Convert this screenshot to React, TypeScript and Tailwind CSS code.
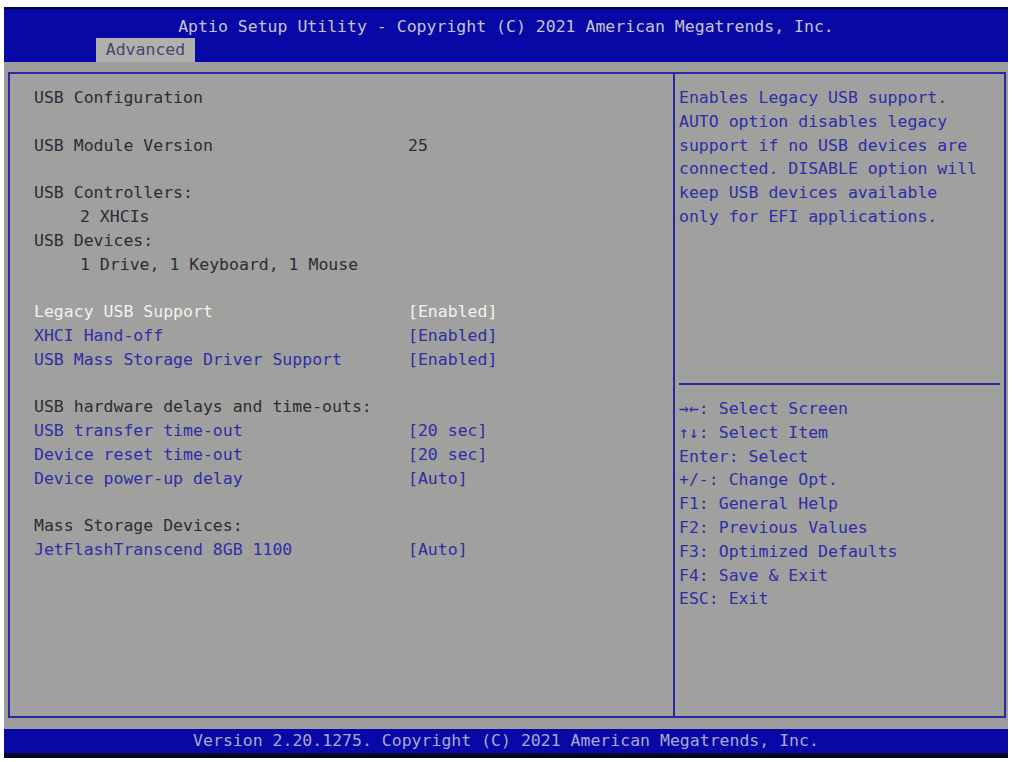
const mono = { fontFamily: '"DejaVu Sans Mono", "Liberation Mono", monospace' };

type Row = { label?: string; value?: string; kind?: "text" | "item" | "active" | "blank"; indent?: boolean };

const rows: Row[] = [
  { label: "USB Configuration", kind: "text" },
  { kind: "blank" },
  { label: "USB Module Version", value: "25", kind: "text" },
  { kind: "blank" },
  { label: "USB Controllers:", kind: "text" },
  { label: "2 XHCIs", kind: "text", indent: true },
  { label: "USB Devices:", kind: "text" },
  { label: "1 Drive, 1 Keyboard, 1 Mouse", kind: "text", indent: true },
  { kind: "blank" },
  { label: "Legacy USB Support", value: "[Enabled]", kind: "active" },
  { label: "XHCI Hand-off", value: "[Enabled]", kind: "item" },
  { label: "USB Mass Storage Driver Support", value: "[Enabled]", kind: "item" },
  { kind: "blank" },
  { label: "USB hardware delays and time-outs:", kind: "text" },
  { label: "USB transfer time-out", value: "[20 sec]", kind: "item" },
  { label: "Device reset time-out", value: "[20 sec]", kind: "item" },
  { label: "Device power-up delay", value: "[Auto]", kind: "item" },
  { kind: "blank" },
  { label: "Mass Storage Devices:", kind: "text" },
  { label: "JetFlashTranscend 8GB 1100", value: "[Auto]", kind: "item" },
];

const help = [
  "Enables Legacy USB support.",
  "AUTO option disables legacy",
  "support if no USB devices are",
  "connected. DISABLE option will",
  "keep USB devices available",
  "only for EFI applications.",
];

const keys = [
  "\u2192\u2190: Select Screen",
  "\u2191\u2193: Select Item",
  "Enter: Select",
  "+/-: Change Opt.",
  "F1: General Help",
  "F2: Previous Values",
  "F3: Optimized Defaults",
  "F4: Save & Exit",
  "ESC: Exit",
];

const colorFor = (kind?: string) => {
  if (kind === "active") return "text-[#f2f2f2]";
  if (kind === "item") return "text-[#2e2ea6]";
  return "text-[#2c2c34]";
};

export default function App() {
  return (
    <div className="w-[1012px] h-[762px] bg-white pt-[7px] pl-[4px] overflow-hidden" style={mono}>
      <div className="w-[1004px] flex flex-col">
        {/* title bar */}
        <div className="h-[55px] border-t-2 border-[#05052a] bg-[#0808a6] flex flex-col">
          <div className="h-[29px] pt-[7px] flex items-center justify-center text-[16.5px] text-[#c4c4d6] whitespace-pre">
            Aptio Setup Utility - Copyright (C) 2021 American Megatrends, Inc.
          </div>
          <div className="flex-1 pl-[92px] flex items-end">
            <div className="h-[24px] w-[99px] bg-[#b0b0ac] text-[#464670] text-[16.5px] flex items-center justify-center">
              Advanced
            </div>
          </div>
        </div>

        {/* body */}
        <div className="h-[667px] bg-[#9d9d9d] pt-[10px] pl-[4px] pr-[2px] pb-[11px]">
          <div className="h-[646px] border-2 border-[#2a2a9c] bg-[#a0a09e] flex">
            <div className="w-[663px] pl-[24px] pt-[12px] text-[16.5px] leading-[23.8px]">
              {rows.map((r, i) =>
                r.kind === "blank" ? (
                  <div key={i} className="h-[23.8px]" />
                ) : (
                  <div key={i} className={`flex whitespace-pre ${colorFor(r.kind)}`}>
                    <div className={`w-[374px] ${r.indent ? "pl-[46px]" : ""}`}>{r.label}</div>
                    <div>{r.value}</div>
                  </div>
                )
              )}
            </div>
            <div className="w-[2px] bg-[#2a2a9c]" />
            <div className="flex-1 flex flex-col text-[16.5px] leading-[23.8px] text-[#2e2ea6]">
              <div className="h-[309px] pl-[4px] pt-[12px] whitespace-pre">
                {help.map((h, i) => (
                  <div key={i}>{h}</div>
                ))}
              </div>
              <div className="mx-[4px] h-[2px] bg-[#2a2a9c]" />
              <div className="pl-[4px] pt-[12px] whitespace-pre">
                {keys.map((k, i) => (
                  <div key={i}>{k}</div>
                ))}
              </div>
            </div>
          </div>
        </div>

        {/* footer */}
        <div className="h-[24px] bg-[#0808a6] flex items-center justify-center text-[16.5px] text-[#a9a9d2] whitespace-pre">
          Version 2.20.1275. Copyright (C) 2021 American Megatrends, Inc.
        </div>
        <div className="h-[5px] bg-[#05052a]" />
      </div>
    </div>
  );
}
